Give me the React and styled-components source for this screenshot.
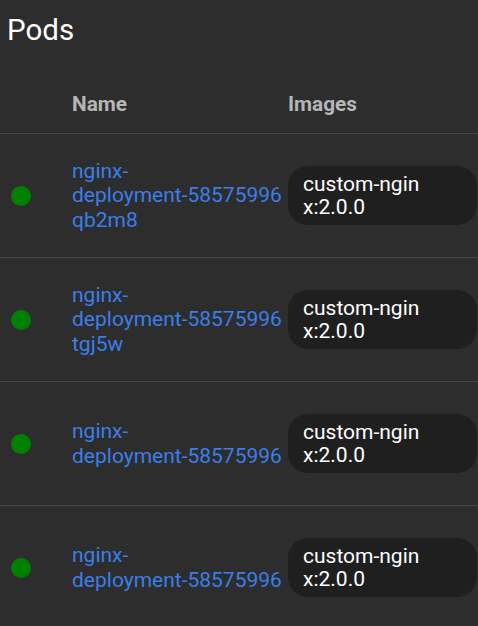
import React from "react"
import styled, { createGlobalStyle } from "styled-components"

const GlobalStyle = createGlobalStyle`
    html, body {
        margin: 0;
        padding: 0;
        background: #2d2d2d;
        overflow: hidden;
    }
    body {
        font-family: Roboto, "Liberation Sans", sans-serif;
    }
`

const Page = styled.div`
    width: 478px;
    min-height: 626px;
    background: #2d2d2d;
    color: #ffffff;
`

const Title = styled.h1`
    margin: 0;
    padding: 13px 0 0 7px;
    font-size: 29.5px;
    font-weight: 400;
    line-height: 34px;
    color: #ffffff;
`

const Grid = styled.div`
    display: grid;
    grid-template-columns: 72px 216px 1fr;
`

const HeadRow = styled(Grid)`
    padding: 45px 0 17px;
    border-bottom: 1px solid #484848;
`

const HeadCell = styled.div`
    grid-column: ${p => p.col};
    font-size: 20.8px;
    font-weight: 700;
    line-height: 24px;
    color: #b6b6b6;
`

const Row = styled(Grid)`
    height: 123px;
    align-items: center;
    border-bottom: 1px solid #484848;
`

const Dot = styled.span`
    width: 20px;
    height: 20px;
    margin-left: 11px;
    border-radius: 50%;
    background: ${p => p.color};
`

const PodName = styled.a`
    font-size: 21px;
    line-height: 24.5px;
    color: #3b7ee8;
    text-decoration: none;
    white-space: nowrap;
`

const Chip = styled.div`
    width: 189px;
    box-sizing: border-box;
    padding: 7px 15px;
    border-radius: 20px;
    background: #1f1f1f;
`

const ChipText = styled.span`
    display: block;
    max-width: 122px;
    font-size: 21px;
    line-height: 22.5px;
    color: #ffffff;
    word-break: break-all;
`

const pods = [
    { lines: ["nginx-", "deployment-58575996", "qb2m8"], image: "custom-nginx:2.0.0", status: "#008000" },
    { lines: ["nginx-", "deployment-58575996", "tgj5w"], image: "custom-nginx:2.0.0", status: "#008000" },
    { lines: ["nginx-", "deployment-58575996"], image: "custom-nginx:2.0.0", status: "#008000" },
    { lines: ["nginx-", "deployment-58575996"], image: "custom-nginx:2.0.0", status: "#008000" },
]

export default function App() {
    return (
        <>
            <GlobalStyle />
            <Page>
                <Title>Pods</Title>
                <HeadRow>
                    <HeadCell col={2}>Name</HeadCell>
                    <HeadCell col={3}>Images</HeadCell>
                </HeadRow>
                {pods.map((pod, i) => (
                    <Row key={"pod_" + i}>
                        <Dot color={pod.status} />
                        <PodName href="#">
                            {pod.lines.map((l, j) => (
                                <React.Fragment key={j}>
                                    {j > 0 && <br />}
                                    {l}
                                </React.Fragment>
                            ))}
                        </PodName>
                        <Chip>
                            <ChipText>{pod.image}</ChipText>
                        </Chip>
                    </Row>
                ))}
            </Page>
        </>
    )
}
